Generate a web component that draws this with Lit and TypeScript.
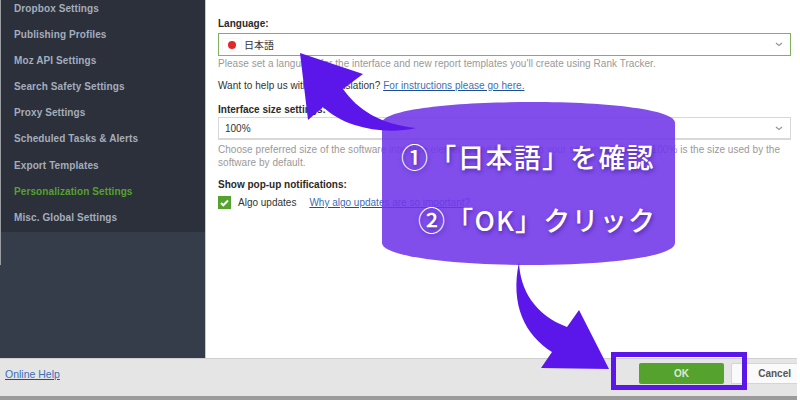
import { LitElement, html, css, svg } from "lit";
import { customElement } from "lit/decorators.js";

const ITEMS = ["Dropbox Settings","Publishing Profiles","Moz API Settings","Search Safety Settings","Proxy Settings","Scheduled Tasks & Alerts","Export Templates","Personalization Settings","Misc. Global Settings"];

@customElement("app-root")
export class AppRoot extends LitElement {
  static styles = css`
    :host { display:block; width:800px; height:400px; position:relative; overflow:hidden; background:#fff;
      font-family:"Liberation Sans",Arial,sans-serif; font-size:10px; color:#333; }
    .window { display:flex; flex-direction:column; width:797px; height:400px; }
    .main { display:flex; height:358px; }
    .side { flex:none; background:#363d4a; box-sizing:border-box; display:flex; flex-direction:column; border-right:1px solid #c8cacc; width:206px; position:relative; overflow:hidden; }
    .side::before { content:""; position:absolute; left:0; top:0; width:1px; height:265px; background:#9a9da2; }
    .nav { height:236.5px; background:#2b303b; display:flex; flex-direction:column; padding:0.5px 0 0 14px; margin-top:-5px; }
    .nav div { height:26.2px; line-height:26.2px; font-weight:700; font-size:10px; color:#a4adbb; letter-spacing:.1px; white-space:nowrap; }
    .nav div.on { color:#55a22e; }
    .content { flex:1; padding:18px 6px 0 12px; min-width:0; }
    .label { font-weight:700; font-size:10px; line-height:12px; color:#2a2a2a; white-space:nowrap; }
    .select { height:23px; box-sizing:border-box; border:1px solid #d8d8d8; border-width:1px 1px 2px 1px; display:flex; align-items:center; margin-top:1px; padding-left:6px; position:relative; color:#333; }
    .select.lang { border:1px solid #7fb25f; height:23px; margin-top:3px; }
    .chev { position:absolute; right:7px; top:8px; }
    .flag { width:18px; height:12px; background:#fff; box-shadow:0 0 1px #ccc; display:flex; align-items:center; justify-content:center; margin-right:3px; margin-left:-2px; }
    .flag i { width:8px; height:8px; border-radius:50%; background:#e02a2a; display:block; }
    .jp { font-family:"Noto Sans CJK JP",sans-serif; font-size:10px; }
    .hint { color:#999; line-height:13px; font-size:10px; margin-top:3px; white-space:nowrap; letter-spacing:.04px; }
    .hint.first { margin-top:1px; }
    .line { margin-top:9px; line-height:14px; white-space:nowrap; color:#333; letter-spacing:.04px; }
    a { color:#3b6fb6; text-decoration:underline; text-decoration-color:#1f4e96; }
    .l2 { margin-top:11px; }
    .l3 { margin-top:10px; }
    .chk { display:flex; align-items:center; margin-top:5px; }
    .box { width:13px; height:13px; background:#55a22e; display:flex; align-items:center; justify-content:center; margin-right:7px; }
    .chk a { margin-left:13px; }
    .bar { background:#e5e5e5; border-top:1px solid #cfcfcf; display:flex; align-items:center; padding-bottom:8px; box-sizing:border-box; height:38px; }
    .help { margin-left:5px; font-size:10.5px; }
    .btns { margin-left:auto; display:flex; align-items:center; }
    .ok { width:85px; height:21px; background:#55a22e; border-radius:2px; color:#dfe9d8; font-weight:700; font-size:10px; display:flex; align-items:center; justify-content:center; }
    .cancel { height:21px; background:#fafafa; border:1px solid #d5d5d5; border-right:none; border-radius:2px 0 0 2px; margin-left:7px; color:#555; font-weight:700; font-size:10px; display:flex; align-items:center; justify-content:flex-end; padding-right:6px; box-sizing:border-box; width:66px; }
    .foot { height:4px; background:#9b9b9b; }
    .overlay { position:absolute; inset:0; pointer-events:none; }
    .art { position:absolute; left:0; top:0; }
    .cap { position:absolute; color:#fff; font-family:"Noto Sans CJK JP",sans-serif; font-weight:500; font-size:27px; line-height:36px; white-space:nowrap; text-shadow:1px 2px 4px rgba(40,10,120,.55); letter-spacing:1.2px; }
    .c1 { left:401px; top:139px; }
    .c2 { left:418px; top:202px; }
    .okbox { position:absolute; left:611px; top:352px; width:136px; height:38px; box-sizing:border-box; border:5px solid #5b17ea; }
  `;
  render() {
    return html`
      <div class="window">
        <div class="main">
          <div class="side"><div class="nav">${ITEMS.map(t => html`<div class=${t.startsWith("Personal") ? "on" : ""}>${t}</div>`)}</div></div>
          <div class="content">
            <div class="label">Language:</div>
            <div class="select lang"><span class="flag"><i></i></span><span class="jp">日本語</span>${this.chev()}</div>
            <div class="hint first">Please set a language for the interface and new report templates you'll create using Rank Tracker.</div>
            <div class="line">Want to help us with the translation? <a>For instructions please go here.</a></div>
            <div class="label l2">Interface size settings:</div>
            <div class="select">100%${this.chev()}</div>
            <div class="hint">Choose preferred size of the software interface elements and the fonts to your screen resolution. 100% is the size used by the<br>software by default.</div>
            <div class="label l3">Show pop-up notifications:</div>
            <div class="chk"><span class="box"><svg width="9" height="8" viewBox="0 0 9 8"><path d="M1 4l2.3 2.3L8 1.5" fill="none" stroke="#fff" stroke-width="2"/></svg></span>Algo updates<a>Why algo updates are so important?</a></div>
          </div>
        </div>
        <div class="bar">
          <a class="help">Online Help</a>
          <div class="btns"><div class="ok">OK</div><div class="cancel">Cancel</div></div>
        </div>
        <div class="foot"></div>
      </div>
      <div class="overlay">
        <svg class="art" width="800" height="400">
          ${svg`
          <path d="M382 123C382 110 450 102 531 102C612 102 675 110 675 123V243C675 256 612 265 531 265C450 265 382 256 382 243Z" fill="#7036e9" fill-opacity=".88"/>
          <path d="M300 53L363 74L343 89C358 110 380 124 416 128C385 135 345 128 323 107L308 120Z" fill="#5b17ea"/>
          <path d="M519 262C520 290 535 315 567 327L579 310L609 369L541 368L552 352C525 335 510 305 519 262Z" fill="#5b17ea"/>
          `}
        </svg>
        <div class="cap c1">①「日本語」を確認</div>
        <div class="cap c2">②「OK」クリック</div>
        <div class="okbox"></div>
      </div>
    `;
  }
  chev() {
    return html`<svg class="chev" width="8" height="5" viewBox="0 0 8 5"><path d="M1 1l3 2.5L7 1" fill="none" stroke="#999" stroke-width="1.3"/></svg>`;
  }
}
